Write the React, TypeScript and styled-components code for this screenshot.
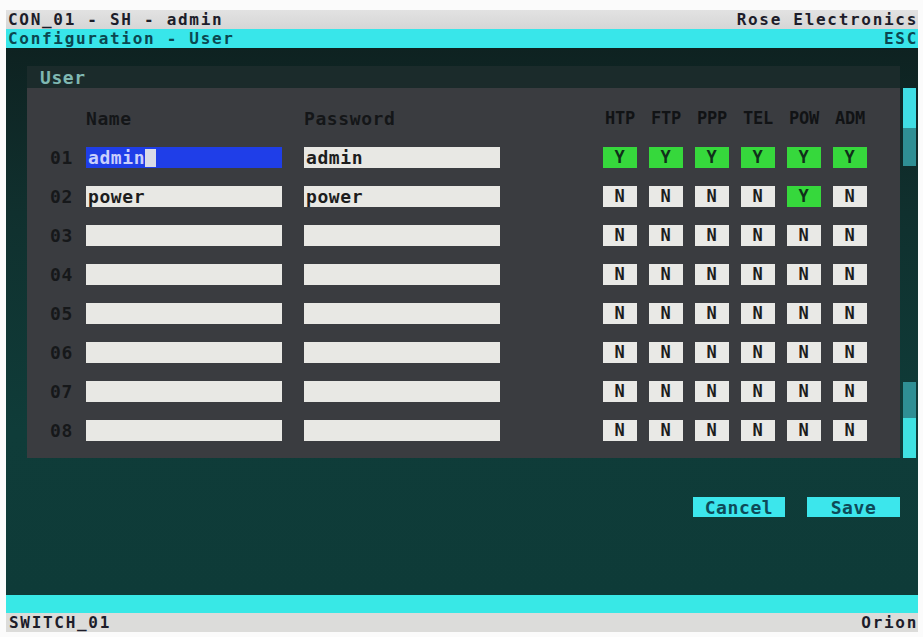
import React from "react";
import styled, { createGlobalStyle } from "styled-components";

const Global = createGlobalStyle`
  html, body { margin: 0; padding: 0; background: #ffffff; }
  body { font-family: "DejaVu Sans Mono", "Liberation Mono", monospace; font-weight: bold; }
`;

const Screen = styled.div`
  width: 923px;
  height: 637px;
  box-sizing: border-box;
  padding: 10px 5px 5px 6px;
  display: flex;
  flex-direction: column;
  background: #fbfbfb;
  font-size: 18px;
  line-height: 19px;
  letter-spacing: 0.6px;
`;

const Bar = styled.div`
  height: 19px;
  flex: none;
  display: flex;
  justify-content: space-between;
  align-items: center;
  padding: 0 0 0 2px;
  font-size: 16px;
  line-height: 19px;
  letter-spacing: 1.7px;
`;

const TitleBar = styled(Bar)`
  background: linear-gradient(#e2e2e2, #d6d6d6);
  color: #1d1d2a;
`;

const MenuBar = styled(Bar)`
  background: #38e6ea;
  color: #0b4750;
`;

const Main = styled.div`
  height: 547px;
  flex: none;
  box-sizing: border-box;
  padding: 18px 0 0 21px;
  background: linear-gradient(#0e2221 0%, #10302e 30%, #0f3c39 70%, #0e3b38 100%);
  display: flex;
  flex-direction: column;
`;

const PanelHeader = styled.div`
  width: 873px;
  height: 22px;
  box-sizing: border-box;
  padding-left: 13px;
  display: flex;
  align-items: center;
  background: #1b2b2b;
  color: #7fb8b2;
`;

const BodyRow = styled.div`
  display: flex;
  gap: 3px;
`;

const PanelBody = styled.div`
  width: 873px;
  height: 370px;
  box-sizing: border-box;
  padding: 11px 0 8px 23px;
  background: #3a3c40;
  display: flex;
  flex-direction: column;
`;

const Scrollbar = styled.div`
  width: 13px;
  height: 370px;
  display: flex;
  flex-direction: column;
`;

const ScrollSeg = styled.div<{ $h: number; $c: string }>`
  height: ${(p) => p.$h}px;
  flex: none;
  background: ${(p) => p.$c};
`;

const Row = styled.div`
  height: 39px;
  display: flex;
  align-items: center;
  color: #16181a;
`;

const Num = styled.div`
  width: 36px;
  flex: none;
  color: #16181a;
`;

const Label = styled.div<{ $w: number; $ml?: number }>`
  width: ${(p) => p.$w}px;
  margin-left: ${(p) => p.$ml ?? 0}px;
  flex: none;
  color: #141618;
`;

const Field = styled.div<{ $ml?: number; $active?: boolean }>`
  width: 196px;
  height: 21px;
  margin-left: ${(p) => p.$ml ?? 0}px;
  flex: none;
  box-sizing: border-box;
  padding-left: 2px;
  display: flex;
  align-items: center;
  background: ${(p) => (p.$active ? "#1f3ee8" : "#e8e8e4")};
  color: ${(p) => (p.$active ? "#c9cffc" : "#1d1d1d")};
`;

const Cursor = styled.span`
  display: inline-block;
  width: 11px;
  height: 18px;
  background: #d9dbe8;
`;

const Flags = styled.div`
  margin-left: 103px;
  display: flex;
  gap: 12px;
`;

const FlagHead = styled.div`
  width: 34px;
  text-align: center;
  font-size: 17px;
  color: #111315;
  letter-spacing: -0.3px;
`;

const Flag = styled.div<{ $on: boolean }>`
  width: 34px;
  height: 21px;
  display: flex;
  align-items: center;
  justify-content: center;
  font-size: 17px;
  background: ${(p) => (p.$on ? "#36d83c" : "#e9e9e6")};
  color: ${(p) => (p.$on ? "#10301a" : "#1d1d1d")};
`;

const ButtonRow = styled.div`
  margin-top: 39px;
  padding-right: 18px;
  display: flex;
  justify-content: flex-end;
  gap: 22px;
`;

const Button = styled.div<{ $w: number }>`
  width: ${(p) => p.$w}px;
  height: 20px;
  display: flex;
  align-items: center;
  justify-content: center;
  background: #3ce6ec;
  color: #0e4a58;
`;

const CyanStrip = styled.div`
  height: 18px;
  flex: none;
  background: #38e8e6;
`;

const StatusBar = styled(Bar)`
  padding-left: 3px;
  background: #dcdcda;
  color: #1d1d2a;
`;

const flagNames = ["HTP", "FTP", "PPP", "TEL", "POW", "ADM"];

type User = { name: string; password: string; flags: boolean[] };

const users: User[] = [
  { name: "admin", password: "admin", flags: [true, true, true, true, true, true] },
  { name: "power", password: "power", flags: [false, false, false, false, true, false] },
  ...Array.from({ length: 6 }, () => ({
    name: "",
    password: "",
    flags: [false, false, false, false, false, false],
  })),
];

export default function App() {
  return (
    <>
      <Global />
      <Screen>
        <TitleBar>
          <span>CON_01 - SH - admin</span>
          <span>Rose Electronics</span>
        </TitleBar>
        <MenuBar>
          <span>Configuration - User</span>
          <span>ESC</span>
        </MenuBar>
        <Main>
          <PanelHeader>User</PanelHeader>
          <BodyRow>
            <PanelBody>
              <Row>
                <Num />
                <Label $w={196}>Name</Label>
                <Label $w={196} $ml={22}>Password</Label>
                <Flags>
                  {flagNames.map((f) => (
                    <FlagHead key={f}>{f}</FlagHead>
                  ))}
                </Flags>
              </Row>
              {users.map((u, i) => (
                <Row key={i}>
                  <Num>{String(i + 1).padStart(2, "0")}</Num>
                  <Field $active={i === 0}>
                    {u.name}
                    {i === 0 && <Cursor />}
                  </Field>
                  <Field $ml={22}>{u.password}</Field>
                  <Flags>
                    {u.flags.map((on, j) => (
                      <Flag key={j} $on={on}>
                        {on ? "Y" : "N"}
                      </Flag>
                    ))}
                  </Flags>
                </Row>
              ))}
            </PanelBody>
            <Scrollbar>
              <ScrollSeg $h={40} $c="#3fdde4" />
              <ScrollSeg $h={38} $c="#2f8f94" />
              <ScrollSeg $h={216} $c="transparent" />
              <ScrollSeg $h={36} $c="#2f8f94" />
              <ScrollSeg $h={40} $c="#3fe2e2" />
            </Scrollbar>
          </BodyRow>
          <ButtonRow>
            <Button $w={92}>Cancel</Button>
            <Button $w={93}>Save</Button>
          </ButtonRow>
        </Main>
        <CyanStrip />
        <StatusBar>
          <span>SWITCH_01</span>
          <span>Orion</span>
        </StatusBar>
      </Screen>
    </>
  );
}
